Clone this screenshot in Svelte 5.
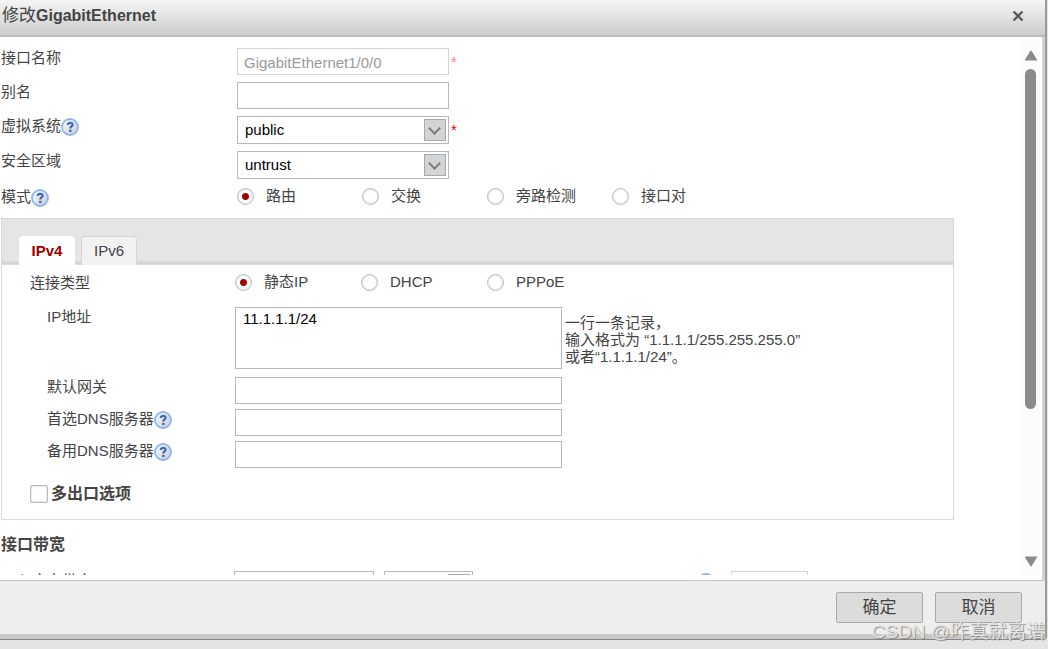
<script lang="ts">
  let alias = $state('');
  let vsys = $state('public');
  let zone = $state('untrust');
  let mode = $state('路由');
  let tab = $state('IPv4');
  let connType = $state('静态IP');
  let address = $state('11.1.1.1/24');
  let gateway = $state('');
  let primaryDns = $state('');
  let backupDns = $state('');
  let multiEgress = $state(false);

  const modes = ['路由', '交换', '旁路检测', '接口对'];
  const tabs = ['IPv4', 'IPv6'];
  const connTypes = ['静态IP', 'DHCP', 'PPPoE'];
</script>

{#snippet help()}
  <svg class="help" viewBox="0 0 18 18" aria-hidden="true">
    <defs>
      <linearGradient id="help-fill" x1="0" y1="0" x2="1" y2="1">
        <stop offset="0" stop-color="#ffffff" />
        <stop offset="1" stop-color="#c3c9d3" />
      </linearGradient>
    </defs>
    <circle cx="9" cy="9" r="8" fill="url(#help-fill)" stroke="#92b4ec" stroke-width="1.8" />
    <path d="M6.7 7.1c0-3 4.9-3 4.9-.4 0 1.700-2.300 1.700-2.300 3.700" fill="none" stroke="#3d6cb4" stroke-width="2.200" />
    <rect x="8.100" y="11.800" width="2.400" height="2.200" fill="#3d6cb4" />
  </svg>
{/snippet}

<div class="page">
  <div class="dialog" role="dialog" aria-labelledby="dialog-title">
    <header>
      <h1 id="dialog-title"><span>修改</span>GigabitEthernet</h1>
      <button class="close" type="button" aria-label="关闭">
        <svg viewBox="0 0 12 12"><path d="M1.500 1.500l9 9M10.500 1.500l-9 9" stroke="#5a5a5a" stroke-width="2.400" /></svg>
      </button>
    </header>

    <div class="viewport">
      <form id="iface">
        <div class="row">
          <label for="name">接口名称</label>
          <input id="name" class="text" value="GigabitEthernet1/0/0" disabled />
          <span class="star faded">*</span>
        </div>
        <div class="row">
          <label for="alias">别名</label>
          <input id="alias" class="text" bind:value={alias} />
        </div>
        <div class="row">
          <label for="vsys">虚拟系统{@render help()}</label>
          <div class="select">
            <select id="vsys" bind:value={vsys}><option>public</option></select>
          </div>
          <span class="star">*</span>
        </div>
        <div class="row">
          <label for="zone">安全区域</label>
          <div class="select">
            <select id="zone" bind:value={zone}>
              <option>untrust</option>
              <option>trust</option>
              <option>dmz</option>
            </select>
          </div>
        </div>
        <div class="row choices" role="radiogroup" aria-labelledby="mode-label">
          <span class="label" id="mode-label">模式{@render help()}</span>
          {#each modes as m}
            <label class="choice"><input type="radio" name="mode" value={m} bind:group={mode} />{m}</label>
          {/each}
        </div>

        <section class="panel">
          <div class="tabs" role="tablist">
            {#each tabs as t}
              <button type="button" role="tab" class:active={tab === t} aria-selected={tab === t} onclick={() => (tab = t)}>{t}</button>
            {/each}
          </div>
          <div class="panel-body">
            <div class="row choices" role="radiogroup" aria-labelledby="conn-label">
              <span class="label" id="conn-label">连接类型</span>
              {#each connTypes as c}
                <label class="choice"><input type="radio" name="conn" value={c} bind:group={connType} />{c}</label>
              {/each}
            </div>
            <div class="row sub address">
              <label for="address">IP地址</label>
              <textarea id="address" bind:value={address}></textarea>
              <p class="hint">一行一条记录，<br />输入格式为 “1.1.1.1/255.255.255.0”<br />或者“1.1.1.1/24”。</p>
            </div>
            <div class="row sub">
              <label for="gateway">默认网关</label>
              <input id="gateway" class="text wide" bind:value={gateway} />
            </div>
            <div class="row sub">
              <label for="dns1">首选DNS服务器{@render help()}</label>
              <input id="dns1" class="text wide" bind:value={primaryDns} />
            </div>
            <div class="row sub">
              <label for="dns2">备用DNS服务器{@render help()}</label>
              <input id="dns2" class="text wide" bind:value={backupDns} />
            </div>
            <label class="check"><input type="checkbox" bind:checked={multiEgress} />多出口选项</label>
          </div>
        </section>

        <h2>接口带宽</h2>
        <div class="row bandwidth">
          <label for="ingress">入方向带宽</label>
          <input id="ingress" class="text" />
          <div class="select unit">
            <select aria-label="单位"><option></option></select>
          </div>
          <span class="threshold">{@render help()}</span>
          <input class="text percent" aria-label="过载保护阈值" disabled />
        </div>
      </form>

      <div class="scrollbar" aria-hidden="true">
        <svg viewBox="0 0 12 10"><path d="M6 1L11 9H1z" /></svg>
        <div class="track"><div class="thumb"></div></div>
        <svg viewBox="0 0 12 10"><path d="M6 9L11 1H1z" /></svg>
      </div>
    </div>

    <footer>
      <button type="submit" form="iface">确定</button>
      <button type="button">取消</button>
    </footer>
  </div>
  <span class="watermark">CSDN @咋真就离谱</span>
</div>

<style>
  :global(body) {
    margin: 0;
    background: #e4e4e4;
  }
  .page {
    position: relative;
    box-sizing: border-box;
    height: 100vh;
    padding: 0 1px 9px 0;
    overflow: hidden;
    color: #444;
    font: 15px/18px "Liberation Sans", "Noto Sans CJK SC", sans-serif;
  }
  .page :global(*) {
    box-sizing: border-box;
  }
  button, input, select, textarea {
    font: inherit;
    color: inherit;
    margin: 0;
  }
  .dialog {
    display: flex;
    flex-direction: column;
    height: 100%;
    background: #fff;
    border-right: 2px solid #9a9a9a;
    border-bottom: 1px solid #858585;
    border-radius: 0 0 4px 0;
    overflow: hidden;
  }
  header {
    display: flex;
    align-items: center;
    justify-content: space-between;
    flex: none;
    height: 37px;
    padding: 0 21px 3px 2px;
    background: linear-gradient(#f5f5f5, #cdcdcd);
    border-bottom: 2px solid #bcbcbc;
  }
  h1 {
    margin: 0;
    font-size: 16px;
    font-weight: bold;
  }
  h1 span {
    font-size: 17px;
    font-weight: normal;
  }
  .close {
    display: flex;
    padding: 0;
    border: 0;
    background: none;
    cursor: pointer;
  }
  .close svg {
    width: 12px;
    height: 12px;
  }

  .viewport {
    display: flex;
    flex: 1;
    min-height: 0;
    padding-bottom: 5px;
    border-right: 3px solid #d2d2d2;
  }
  form {
    flex: 1;
    min-width: 0;
    padding-top: 11px;
    overflow: hidden;
  }
  .row {
    display: flex;
    align-items: flex-start;
    margin-bottom: 7px;
  }
  .row > label:first-child,
  .label {
    display: flex;
    align-items: center;
    flex: none;
    width: 237px;
    padding: 1px 0 0 1px;
  }
  .help {
    width: 18px;
    height: 18px;
    flex: none;
    margin: 1px 0 -1px 0;
  }
  .text, select, textarea {
    border: 1px solid #b8b8bc;
    border-radius: 0;
    background: #fff;
    color: #000;
    outline: none;
  }
  .text {
    width: 212px;
    height: 27px;
    padding: 2px 6px 0;
  }
  .text:disabled {
    color: #999;
    border-color: #d4d4d4;
  }
  .select {
    position: relative;
    width: 212px;
  }
  select {
    display: block;
    width: 100%;
    height: 28px;
    padding: 0 7px;
    appearance: none;
  }
  .select::before {
    content: '';
    position: absolute;
    box-sizing: border-box;
    top: 3px;
    right: 3px;
    width: 22px;
    height: 22px;
    border: 1px solid #a8aab2;
    background: #d3d4d6;
    pointer-events: none;
  }
  .select::after {
    content: '';
    position: absolute;
    box-sizing: border-box;
    top: 8px;
    right: 10px;
    width: 9px;
    height: 9px;
    border: solid #7c7c7c;
    border-width: 0 2px 2px 0;
    transform: rotate(45deg);
    pointer-events: none;
  }
  .star {
    padding: 5px 0 0 2px;
    color: #f00;
  }
  .faded {
    opacity: 0.5;
  }

  .choices {
    align-items: center;
    height: 20px;
    margin-bottom: 12px;
  }
  .choice {
    display: flex;
    align-items: center;
    gap: 12px;
    width: 125px;
    white-space: nowrap;
  }
  .choice input {
    appearance: none;
    flex: none;
    width: 17px;
    height: 17px;
    border: 1px solid #bdbdbd;
    border-radius: 50%;
    background: #fff;
    box-shadow: inset 0 0 2px #bbb;
  }
  .choice input:checked {
    background: radial-gradient(circle, #a00000 3px, #fff 4px);
  }

  .panel {
    margin: 0 67px 0 1px;
    border: 1px solid #d8d8d8;
  }
  .tabs {
    display: flex;
    align-items: flex-end;
    gap: 6px;
    height: 46px;
    padding-left: 17px;
    background: linear-gradient(#e5e5e5 41px, #cfcfcf 45px, #e8e8e8 46px);
  }
  .tabs button {
    width: 56px;
    height: 29px;
    padding: 0;
    border: 1px solid #d6d6d6;
    border-bottom: 0;
    border-radius: 4px 4px 0 0;
    background: #f2f2f2;
  }
  .tabs .active {
    border-color: #fff;
    background: #fff;
    color: #a00000;
    font-weight: bold;
  }
  .panel-body {
    padding: 7px 0 16px 28px;
  }
  .panel-body .row > :first-child {
    width: 205px;
    padding-left: 0;
  }
  .panel-body .sub {
    margin-bottom: 5px;
  }
  .panel-body .sub > :first-child {
    padding-left: 17px;
  }
  .panel-body .choices {
    margin-bottom: 15px;
  }
  .panel-body .choice {
    width: 126px;
  }
  .panel-body .address {
    margin-bottom: 8px;
  }
  textarea {
    display: block;
    width: 327px;
    height: 62px;
    padding: 2px 7px;
    resize: none;
  }
  .wide {
    width: 327px;
  }
  .hint {
    margin: 7px 0 0 3px;
    line-height: 17px;
  }
  .check {
    display: flex;
    align-items: center;
    gap: 3px;
    margin-top: 17px;
    font-size: 16px;
    font-weight: bold;
  }
  .check input {
    appearance: none;
    width: 18px;
    height: 18px;
    border: 1px solid #b9b9c0;
    border-radius: 2px;
    background: #fff;
    box-shadow: inset 0 0 2px #bbb;
  }
  h2 {
    margin: 16px 0 17px 1px;
    font-size: 16px;
    font-weight: bold;
  }
  .row.bandwidth > label:first-child {
    width: 234px;
    padding-left: 17px;
  }
  .bandwidth .text {
    width: 140px;
  }
  .unit {
    width: 89px;
    margin: 0 224px 0 10px;
  }
  .threshold {
    display: flex;
    padding: 1px 16px 0 0;
  }
  .bandwidth .percent {
    width: 77px;
  }

  .scrollbar {
    display: flex;
    flex-direction: column;
    align-items: center;
    gap: 8px;
    width: 19px;
    margin: 3px 2px 0 0;
    padding: 10px 0 8px;
    background: #fcfcfc;
  }
  .scrollbar svg {
    width: 14px;
    height: 11px;
    fill: #8b8b8b;
    stroke: #8b8b8b;
    stroke-linejoin: round;
  }
  .track {
    flex: 1;
    width: 11px;
  }
  .thumb {
    height: 71%;
    border-radius: 6px;
    background: #8b8b8b;
  }

  footer {
    display: flex;
    justify-content: flex-end;
    gap: 12px;
    flex: none;
    height: 59px;
    padding: 11px 23px 0;
    border-top: 1px solid #c8c8c8;
    border-bottom: 5px solid #c8c8c8;
    background: #eee;
  }
  footer button {
    width: 87px;
    height: 31px;
    padding: 0;
    border: 1px solid #a9a9ae;
    border-radius: 2px;
    background: #dcdcdc;
    font-size: 17px;
  }
  .watermark {
    position: absolute;
    right: 3px;
    bottom: 7px;
    color: #e4e4e4;
    font-size: 19px;
    line-height: 20px;
    text-shadow: 1px 1px 1px #888;
    pointer-events: none;
  }
</style>
